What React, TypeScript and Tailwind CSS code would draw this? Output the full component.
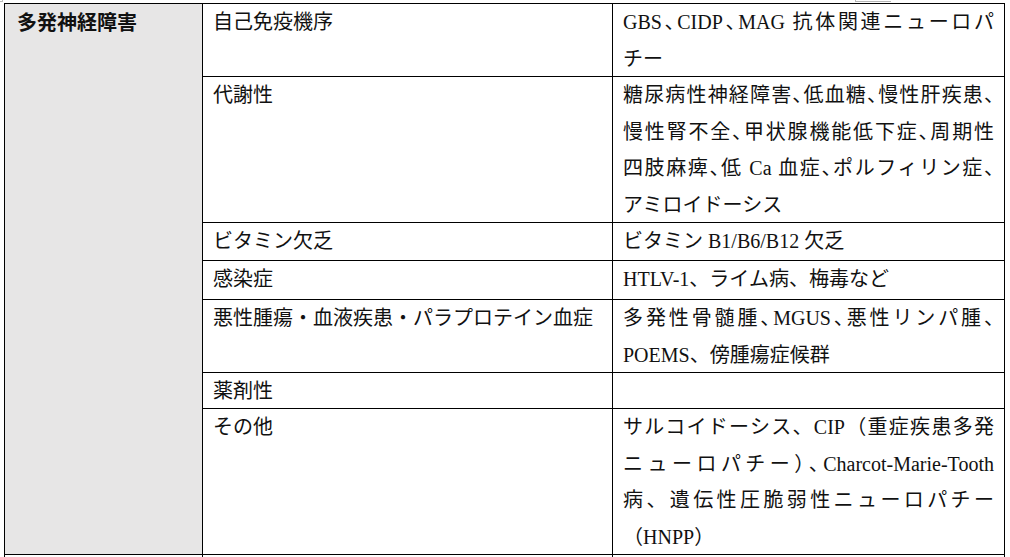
import React from "react";

const FONT = "[font-family:'Liberation_Serif','Noto_Sans_CJK_JP',serif]";

type Mode = "jh" | "j" | "n";

function Lines({ lines, modes }: { lines: string[]; modes: Mode[] }) {
  return (
    <>
      {lines.map((l, i) => {
        const m = modes[i];
        const cls =
          m === "jh"
            ? "[text-align-last:justify] text-justify [font-feature-settings:'halt']"
            : m === "j"
            ? "[text-align-last:justify] text-justify"
            : "text-left";
        return (
          <div key={i} className={"whitespace-nowrap " + cls}>
            {l}
          </div>
        );
      })}
    </>
  );
}

const rows: { label: string; lines: string[]; modes: Mode[] }[] = [
  {
    label: "自己免疫機序",
    lines: ["GBS、CIDP、MAG 抗体関連ニューロパ", "チー"],
    modes: ["jh", "n"],
  },
  {
    label: "代謝性",
    lines: [
      "糖尿病性神経障害、低血糖、慢性肝疾患、",
      "慢性腎不全、甲状腺機能低下症、周期性",
      "四肢麻痺、低 Ca 血症、ポルフィリン症、",
      "アミロイドーシス",
    ],
    modes: ["jh", "jh", "jh", "n"],
  },
  {
    label: "ビタミン欠乏",
    lines: ["ビタミン B1/B6/B12 欠乏"],
    modes: ["n"],
  },
  {
    label: "感染症",
    lines: ["HTLV-1、ライム病、梅毒など"],
    modes: ["n"],
  },
  {
    label: "悪性腫瘍・血液疾患・パラプロテイン血症",
    lines: ["多発性骨髄腫、MGUS、悪性リンパ腫、", "POEMS、傍腫瘍症候群"],
    modes: ["jh", "n"],
  },
  {
    label: "薬剤性",
    lines: [],
    modes: [],
  },
  {
    label: "その他",
    lines: [
      "サルコイドーシス、CIP（重症疾患多発",
      "ニューロパチー）、Charcot-Marie-Tooth",
      "病、遺伝性圧脆弱性ニューロパチー",
      "（HNPP）",
    ],
    modes: ["j", "jh", "j", "n"],
  },
];

export default function App() {
  return (
    <div className={"relative w-[1010px] h-[557px] overflow-hidden bg-white text-[#111] " + FONT}>
      {/* stray marks at the top edge */}
      <div className="absolute left-0 top-0 w-[3px] h-[2px] border-r border-b border-[#bdbdbd]" />
      <div className="absolute left-[855px] top-0 w-[36px] h-[2px] border-l border-b border-[#b5b5b5]" />

      <div className="ml-[4px] mt-[3px] w-[1001px] border-l border-t border-black grid grid-cols-[198px_410px_392px] grid-rows-[73px_146px_38px_39px_73px_36px_146px_30px] text-[20px] leading-[36.5px]">
        <div className="row-span-7 col-start-1 row-start-1 bg-[#e7e6e6] border-r border-b border-black pl-[12px] font-bold [font-family:'Noto_Sans_CJK_JP',sans-serif]">
          多発神経障害
        </div>
        {rows.map((r, i) => (
          <React.Fragment key={i}>
            <div className="col-start-2 border-r border-b border-black pl-[10px] whitespace-nowrap">
              {r.label}
            </div>
            <div className="col-start-3 border-r border-b border-black px-[10px]">
              <Lines lines={r.lines} modes={r.modes} />
            </div>
          </React.Fragment>
        ))}
        <div className="col-start-1 border-r border-black" />
        <div className="col-start-2 border-r border-black" />
        <div className="col-start-3 border-r border-black" />
      </div>
    </div>
  );
}
